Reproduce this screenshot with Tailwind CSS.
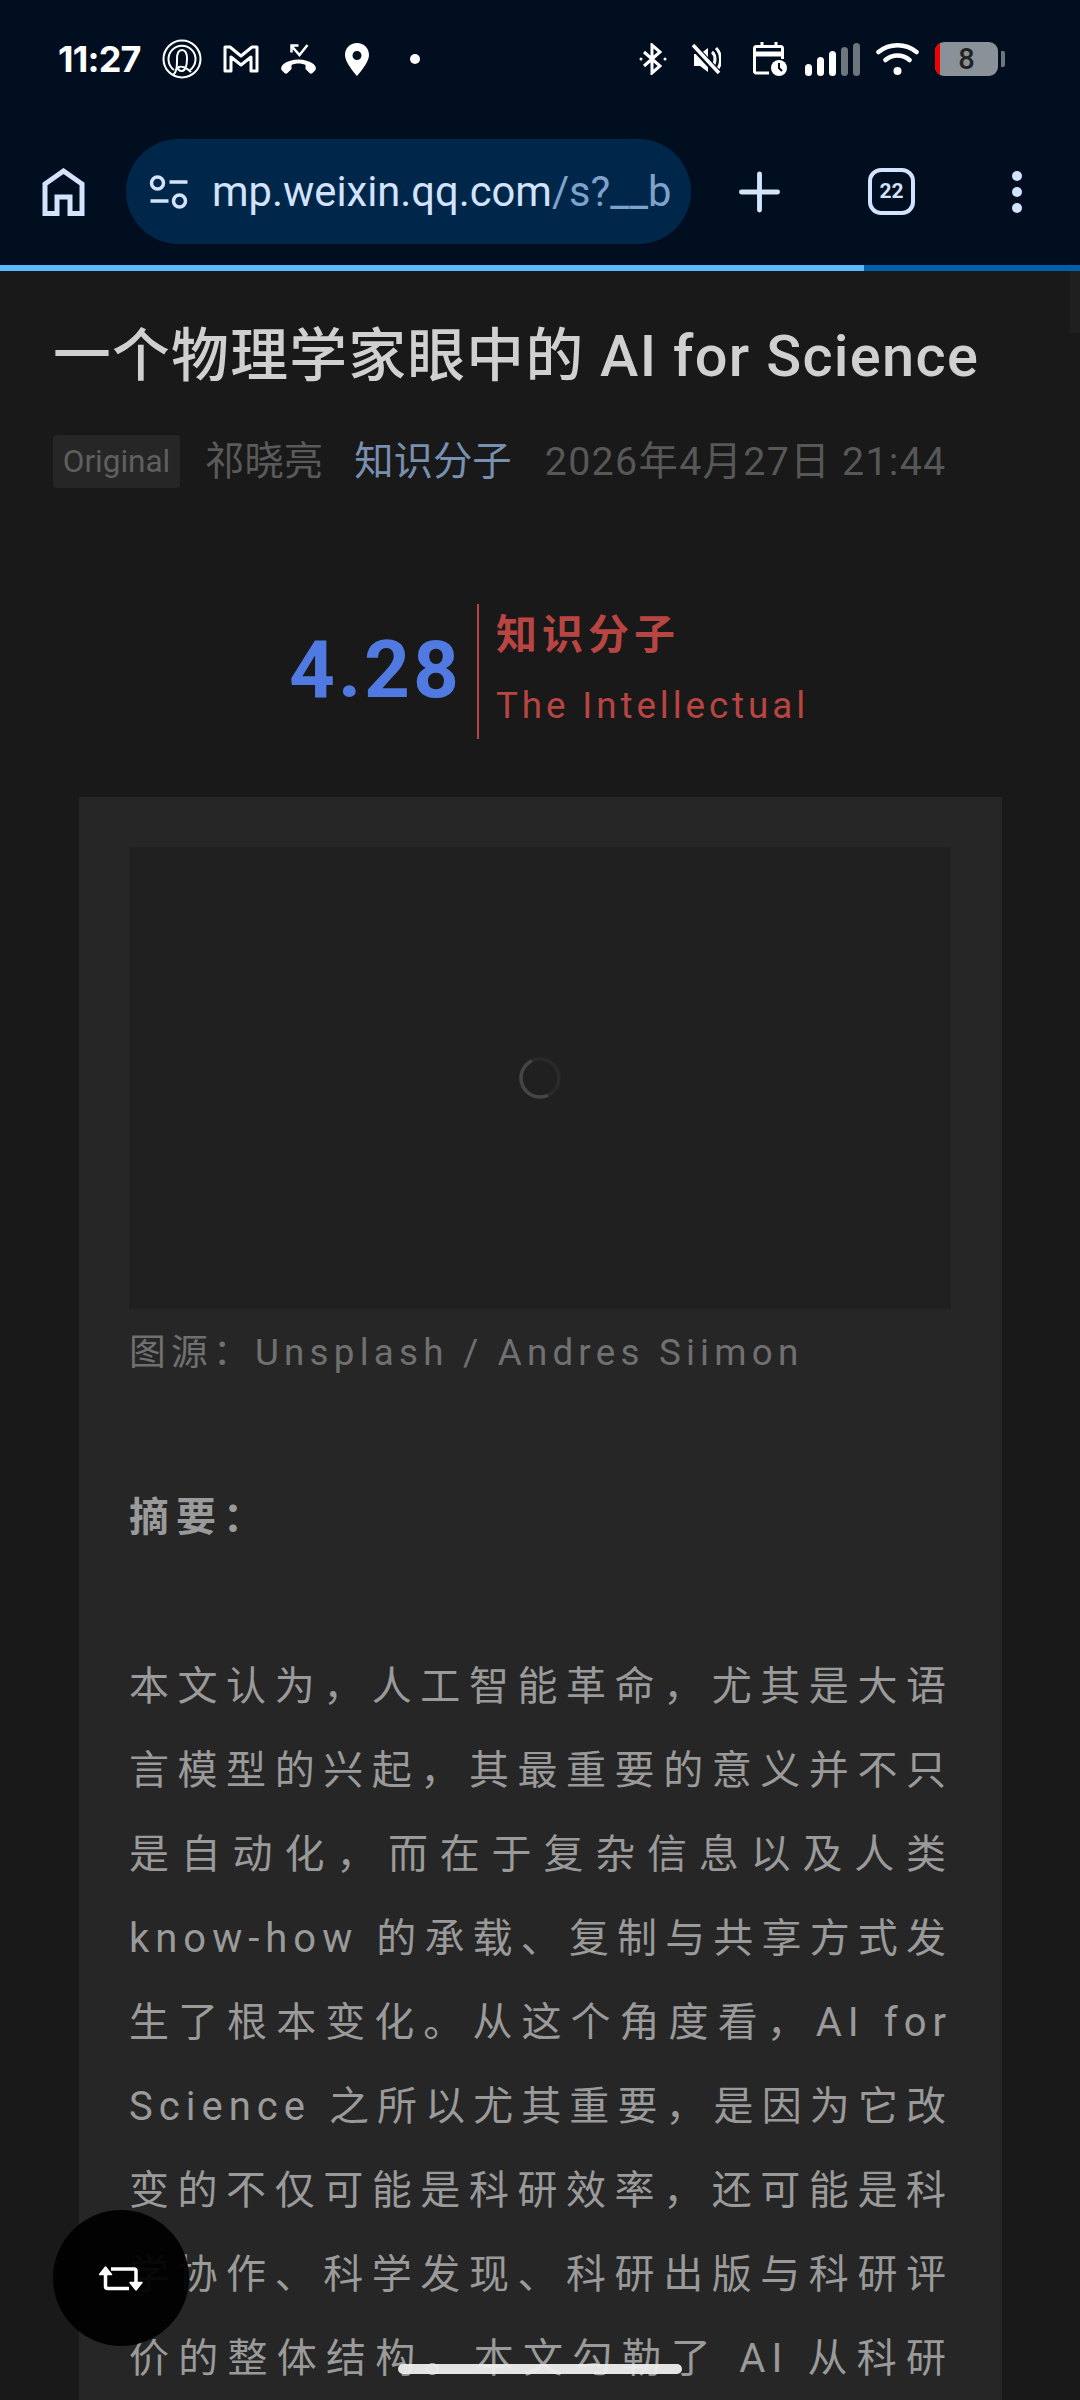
<!DOCTYPE html>
<html lang="en">
<head>
    <meta charset="UTF-8">
    <meta name="viewport" content="width=device-width, initial-scale=1.0">
    <title>一个物理学家眼中的 AI for Science</title>
    <script src="https://cdn.jsdelivr.net/npm/@tailwindcss/browser@4"></script>
</head>
<body class="bg-[#191919] font-['Roboto','Noto_Sans_CJK_SC',sans-serif]">
<div class="relative w-[1080px] h-[2400px] overflow-hidden bg-[#191919]">

    <!-- Browser chrome -->
    <header class="bg-[#000e1f] h-[265px]">
        <!-- Status bar -->
        <div class="h-[139px] pl-[58px] pr-[75px] pt-[41px] flex items-start text-white">
            <span class="text-[36px] leading-[36px] font-bold font-['Inter','Roboto',sans-serif] tracking-[-0.8px] w-[83px] whitespace-nowrap">11:27</span>
            <div class="flex items-center h-[36px] ml-[21px]">
                <svg class="w-[40px] h-[40px]" viewBox="0 0 40 40" fill="none" stroke="white" stroke-width="2"><circle cx="20" cy="20" r="18.500"/><path d="M12 31A13.500 13.500 0 1 1 28 31"/><path d="M11 36c4-3 4-9 4-16 0-6 2-9 5-9s5 3 5 9c0 7-2 12-5 12s-5-2-3-4c2-1 7 0 12 5"/></svg>
                <svg class="w-[36px] h-[28px] ml-[21px]" viewBox="0 0 36 28" fill="none" stroke="white" stroke-width="3" stroke-linejoin="round"><path d="M2 2h5l11 9L29 2h5v24h-6V12l-10 8-10-8v14H2z"/></svg>
                <svg class="w-[39px] h-[32px] ml-[20px]" viewBox="0 0 38 32" fill="white"><path d="M2 27c-1-2 0-4 2-6 8-6 22-6 30 0 2 2 3 4 2 6l-3 3c-1 1-2 1-3 0l-4-4v-4c-4-2-10-2-14 0v4l-4 4c-1 1-2 1-3 0z"/><path d="M11 2.500h8M12 1.500v8M12 3l8 9 8-10" fill="none" stroke="white" stroke-width="2.500"/></svg>
                <svg class="w-[24px] h-[33px] ml-[27px]" viewBox="0 0 24 33"><path fill="white" fill-rule="evenodd" d="M12 0C5 0 0 5 0 12c0 8 12 21 12 21s12-13 12-21C24 5 19 0 12 0zm0 8a4.500 4.500 0 1 1 0 9 4.500 4.500 0 0 1 0-9z"/></svg>
                <span class="w-[10px] h-[10px] rounded-full bg-white ml-[41px]"></span>
            </div>
            <div class="flex items-center h-[36px] ml-auto">
                <svg class="w-[28px] h-[32px]" viewBox="0 0 28 32" fill="none" stroke="white" stroke-width="3"><path d="M5 9l16 14-8 7V2l8 7L5 23"/><circle cx="2" cy="16" r="1.500" fill="white" stroke="none"/><circle cx="26" cy="16" r="1.500" fill="white" stroke="none"/></svg>
                <svg class="w-[30px] h-[32px] ml-[24px]" viewBox="0 0 30 32" fill="white"><path d="M3 11h6l8-6v24l-8-6H3z"/><path d="M21 9c4 3 4 11 0 15M25 5c6 6 6 17 0 23" fill="none" stroke="white" stroke-width="3"/><path d="M1 2l27 29" stroke="#000e1f" stroke-width="7"/><path d="M2 2l26 28" stroke="white" stroke-width="3.500"/></svg>
                <svg class="w-[34px] h-[34px] ml-[32px]" viewBox="0 0 34 34" fill="none" stroke="white" stroke-width="3"><path d="M16 31H3a1.500 1.500 0 0 1-1.500-1.500V6A1.500 1.500 0 0 1 3 4.500h25A1.500 1.500 0 0 1 29.500 6v11"/><path d="M2 12h27" stroke-width="5"/><path d="M9 0v6M23 0v6"/><circle cx="26" cy="26" r="8" fill="white" stroke="none"/><path d="M26 21v5l3 3" stroke="#000e1f" stroke-width="2"/></svg>
                <div class="flex items-end gap-[5px] h-[33px] ml-[18px]">
                    <span class="w-[7px] h-[12px] rounded-full bg-white"></span>
                    <span class="w-[7px] h-[19px] rounded-full bg-white"></span>
                    <span class="w-[7px] h-[25px] rounded-full bg-white"></span>
                    <span class="w-[7px] h-[29px] rounded-full bg-[#6d757d]"></span>
                    <span class="w-[7px] h-[33px] rounded-full bg-[#6d757d]"></span>
                </div>
                <svg class="w-[43px] h-[33px] ml-[16px]" viewBox="0 0 42 33" fill="none" stroke="white" stroke-width="4.500" stroke-linecap="round"><path d="M2 9c11-9 27-9 38 0M9 17c7-6 17-6 24 0"/><circle cx="21" cy="28" r="4" fill="white" stroke="none"/></svg>
                <div class="flex items-center ml-[16px]">
                    <div class="relative w-[63px] h-[34px] rounded-[9px] bg-[#8b9198] overflow-hidden flex items-center justify-center">
                        <span class="absolute left-0 top-0 bottom-0 w-[5px] bg-[#f00000]"></span>
                        <span class="text-[#222] text-[29px] leading-none font-medium">8</span>
                    </div>
                    <span class="w-[4px] h-[16px] ml-[3px] rounded-r-[2px] bg-[#6d757d]"></span>
                </div>
            </div>
        </div>
        <!-- Toolbar -->
        <div class="flex items-center h-[105px] text-[#d3e3fd]">
            <svg class="w-[43px] h-[48px] ml-[42px]" viewBox="0 0 42 48" fill="none" stroke="#d3e3fd" stroke-width="5"><path d="M2.500 45.500V16L21 3l18.500 13v29.500H27.500V29h-13v16.500z"/></svg>
            <div class="flex items-center w-[565px] h-[105px] ml-[41px] rounded-full bg-[#00274a]">
                <svg class="w-[39px] h-[34px] ml-[23px] shrink-0" viewBox="0 0 38 34" fill="none" stroke="#d3e3fd" stroke-width="3.500"><circle cx="8" cy="8" r="6"/><path d="M20 7h18M1 26h18"/><circle cx="30" cy="26" r="6"/></svg>
                <span class="ml-[24px] text-[41.700px] leading-none whitespace-nowrap">mp.weixin.qq.com<span class="text-[#7fa2cc]">/s?__b</span></span>
            </div>
            <svg class="w-[41px] h-[42px] ml-[48px]" viewBox="0 0 42 42" stroke="#d3e3fd" stroke-width="5" stroke-linecap="round"><path d="M21 2.500v37M2.500 21h37"/></svg>
            <div class="w-[47px] h-[47px] ml-[88px] rounded-[13px] border-[4.500px] border-[#d3e3fd] flex items-center justify-center text-[21px] leading-none font-bold">22</div>
            <div class="flex flex-col gap-[6px] ml-[97px]">
                <span class="w-[10px] h-[10px] rounded-full bg-[#d3e3fd]"></span>
                <span class="w-[10px] h-[10px] rounded-full bg-[#d3e3fd]"></span>
                <span class="w-[10px] h-[10px] rounded-full bg-[#d3e3fd]"></span>
            </div>
        </div>
    </header>

    <!-- Load progress -->
    <div class="h-[6px] bg-[#0060a8]"><div class="h-full w-[864px] bg-[#5ab8ff]"></div></div>

    <!-- Article -->
    <main>
        <h1 class="mt-[47px] pl-[53px] text-[57.750px] leading-[76px] font-medium text-[#d0d0d0] tracking-[1.3px] whitespace-nowrap">一个物理学家眼中的 AI for Science</h1>
        <div class="flex items-center mt-[41px] pl-[53px] text-[39.400px] leading-[53px] whitespace-nowrap">
            <span class="bg-[#262626] text-[#5f5f5f] text-[31.500px] h-[53px] leading-[53px] w-[127px] text-center rounded-[4px]">Original</span>
            <span class="ml-[25px] text-[#5a5a5a]">祁晓亮</span>
            <span class="ml-[31px] text-[#7890b0]">知识分子</span>
            <span class="ml-[33px] text-[#575757] tracking-[1.3px]">2026年4月27日 21:44</span>
        </div>

        <!-- Journal masthead -->
        <div class="flex items-center mt-[116px] pl-[289px] h-[135px]">
            <span class="text-[80px] leading-none font-bold text-[#507ae2] tracking-[3px] mb-[4px]">4.28</span>
            <div class="ml-[15px] h-[135px] border-l-2 border-[#b94542] pl-[17px] text-[#b94542]">
                <p class="text-[41px] leading-[48px] font-bold tracking-[5px] mt-[7px] whitespace-nowrap">知识分子</p>
                <p class="text-[36.800px] leading-[44px] tracking-[3.900px] mt-[25px] whitespace-nowrap">The Intellectual</p>
            </div>
        </div>

        <!-- Article card -->
        <section class="mt-[58px] ml-[79px] w-[923px] bg-[#262626] pt-[50px] px-[50px] pb-[60px]">
            <div class="w-[822px] h-[462px] bg-[#202020] flex items-center justify-center">
                <svg class="w-[42px] h-[42px]" viewBox="0 0 42 42" fill="none" stroke-width="3.500"><circle cx="21" cy="21" r="19" stroke="#2a2a2a"/><path d="M21 2A19 19 0 0 0 2 21a19 19 0 0 0 19 19" stroke="#454545" transform="rotate(-25 21 21)"/></svg>
            </div>
            <p class="mt-[22px] text-[36.800px] leading-[44px] text-[#707070] tracking-[5.200px] whitespace-nowrap">图源：Unsplash / Andres Siimon</p>
            <p class="mt-[121px] text-[40px] leading-[44px] font-bold text-[#9a9a9a] tracking-[7px]">摘要：</p>
            <p class="mt-[105px] text-[40px] leading-[84px] text-[#9a9a9a] tracking-[6px] text-justify [text-align-last:justify]">本文认为，人工智能革命，尤其是大语言模型的兴起，其最重要的意义并不只是自动化，而在于复杂信息以及人类 know-how 的承载、复制与共享方式发生了根本变化。从这个角度看，AI for Science 之所以尤其重要，是因为它改变的不仅可能是科研效率，还可能是科学协作、科学发现、科研出版与科研评价的整体结构。本文勾勒了 AI 从科研</p>
        </section>
    </main>

    <!-- Scrollbar thumb -->
    <div class="absolute right-0 top-[271px] w-[10px] h-[62px] bg-[#1f1f1f]"></div>

    <!-- Floating button -->
    <button class="absolute left-[53px] top-[2210px] w-[136px] h-[136px] rounded-full bg-black/95 flex items-center justify-center">
        <svg class="w-[44px] h-[25px]" viewBox="0 0 44 25" fill="none" stroke="white" stroke-width="3.500"><path d="M6.500 8v12.500a2 2 0 0 0 2 2H30M12 3h23a2 2 0 0 1 2 2v12"/><path d="M6.500 1L12.500 8.500H.5zM37 24l-6-7.500h12z" fill="white" stroke="white" stroke-width="1.500" stroke-linejoin="round"/></svg>
    </button>

    <!-- Gesture bar -->
    <div class="absolute left-[398px] top-[2364px] w-[284px] h-[10px] rounded-full bg-[#eeeeee]/95"></div>
</div>
</body>
</html>
